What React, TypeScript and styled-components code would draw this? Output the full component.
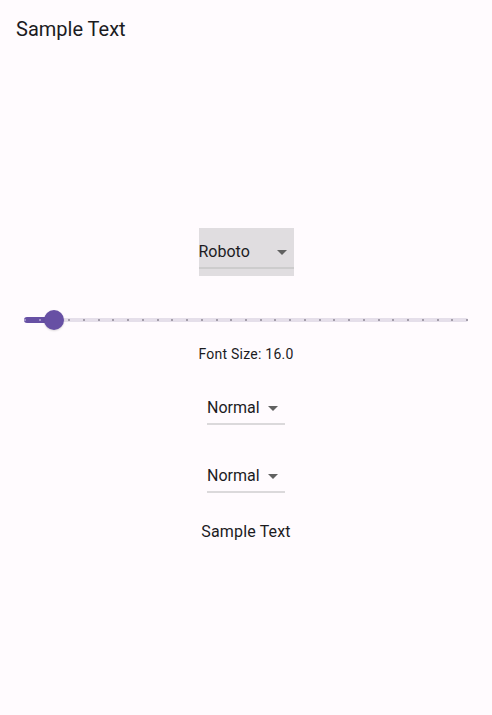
import React from "react";
import styled, { createGlobalStyle } from "styled-components";

const GlobalStyle = createGlobalStyle`
  html, body {
    margin: 0;
    padding: 0;
    background: #fffbfe;
    font-family: Roboto, "Noto Sans", "Liberation Sans", sans-serif;
    color: #1c1b1f;
  }
  * { box-sizing: border-box; }
`;

const Page = styled.div`
  height: 715px;
  display: flex;
  flex-direction: column;
  background: #fffbfe;
`;

const AppBar = styled.header`
  height: 56px;
  flex: none;
  display: flex;
  align-items: center;
  padding: 2px 16px 0;
  font-size: 20px;
  font-weight: 400;
  color: #1c1b1f;
`;

const Body = styled.main`
  flex: 1;
  display: flex;
  flex-direction: column;
  align-items: center;
  justify-content: center;
  gap: 20px;
`;

const SliderGroup = styled.div`
  align-self: stretch;
  display: flex;
  flex-direction: column;
  align-items: center;
`;

const DropdownBox = styled.div<{ $focused?: boolean }>`
  position: relative;
  height: 48px;
  display: flex;
  align-items: center;
  background: ${(p) => (p.$focused ? "#e0dde0" : "transparent")};
  cursor: pointer;
`;

const DropdownLabel = styled.span<{ $w: number }>`
  width: ${(p) => p.$w}px;
  font-size: 16px;
  line-height: 24px;
  color: #1c1b1f;
  white-space: nowrap;
`;

const ArrowIcon = styled.svg`
  width: 24px;
  height: 24px;
  flex: none;
  fill: #616161;
`;

const Underline = styled.div`
  position: absolute;
  left: 0;
  right: 0;
  bottom: 7px;
  height: 2px;
  background: rgba(189, 189, 189, 0.55);
`;

const SliderWrap = styled.div`
  align-self: stretch;
  height: 48px;
  padding: 0 24px;
  display: flex;
  align-items: center;
`;

const Track = styled.div`
  position: relative;
  flex: 1;
  height: 4px;
  border-radius: 2px;
  background: #e5dfea;
`;

const ActiveTrack = styled.div`
  position: absolute;
  left: 0;
  top: -1px;
  height: 6px;
  border-radius: 3px 0 0 3px;
  background: #6750a4;
`;

const Tick = styled.span<{ $active: boolean }>`
  position: absolute;
  top: 1px;
  width: 2px;
  height: 2px;
  background: ${(p) => (p.$active ? "#a192c7" : "#a39daa")};
`;

const Thumb = styled.span`
  position: absolute;
  top: 50%;
  width: 20px;
  height: 20px;
  margin: -10px 0 0 -10px;
  border-radius: 50%;
  background: #6750a4;
  box-shadow: 0 1px 2px rgba(0, 0, 0, 0.15);
`;

const Caption = styled.div`
  font-size: 14px;
  line-height: 20px;
  letter-spacing: 0.25px;
  color: #1c1b1f;
`;

const Preview = styled.div`
  font-size: 16px;
  line-height: 23px;
  letter-spacing: 0.15px;
  color: #1c1b1f;
`;

function Dropdown({ label, width, focused }: { label: string; width: number; focused?: boolean }) {
  return (
    <DropdownBox $focused={focused}>
      <DropdownLabel $w={width}>{label}</DropdownLabel>
      <ArrowIcon viewBox="0 0 24 24">
        <path d="M7 10l5 5 5-5z" />
      </ArrowIcon>
      <Underline />
    </DropdownBox>
  );
}

const TRACK_W = 444;

function Slider({ value, min, max, divisions }: { value: number; min: number; max: number; divisions: number }) {
  const frac = (value - min) / (max - min);
  const px = (f: number) => Math.round(1 + (TRACK_W - 2) * f);
  return (
    <SliderWrap>
      <Track>
        <ActiveTrack style={{ width: px(frac) }} />
        {Array.from({ length: divisions + 1 }, (_, i) => (
          <Tick key={i} $active={i / divisions <= frac} style={{ left: px(i / divisions) - 1 }} />
        ))}
        <Thumb style={{ left: px(frac) }} />
      </Track>
    </SliderWrap>
  );
}

export default function App() {
  return (
    <>
      <GlobalStyle />
      <Page>
        <AppBar>Sample Text</AppBar>
        <Body>
          <Dropdown label="Roboto" width={71} focused />
          <SliderGroup>
            <Slider value={16} min={12} max={72} divisions={30} />
            <Caption>Font Size: 16.0</Caption>
          </SliderGroup>
          <Dropdown label="Normal" width={54} />
          <Dropdown label="Normal" width={54} />
          <Preview>Sample Text</Preview>
        </Body>
      </Page>
    </>
  );
}
